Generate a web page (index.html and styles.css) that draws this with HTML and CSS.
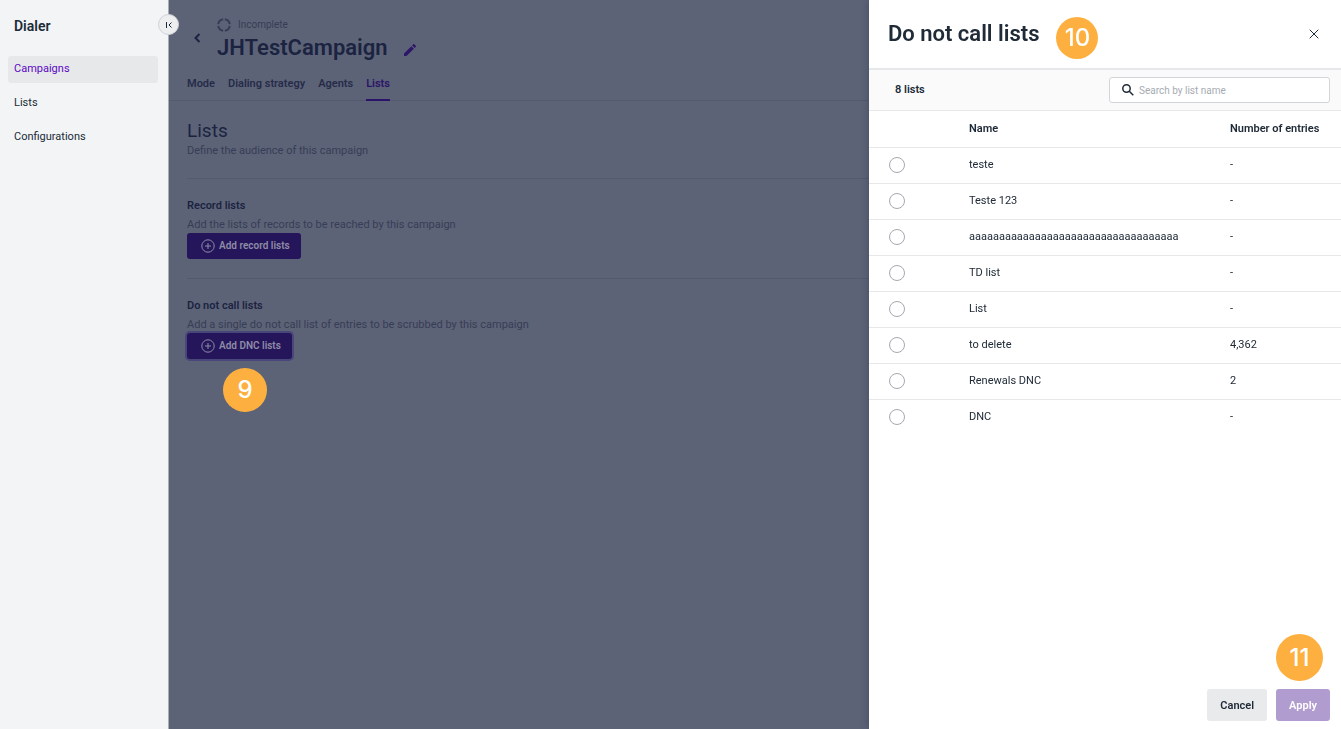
FILE: index.html
```html
<!DOCTYPE html>
<html lang="en">
<head>
    <meta charset="utf-8">
    <title>Dialer</title>
    <link rel="stylesheet" href="styles.css">
</head>
<body>
    <div class="app">
        <aside class="sidebar">
            <h2 class="sidebar-title">Dialer</h2>
            <nav class="sidebar-nav">
                <a href="#" class="active">Campaigns</a>
                <a href="#">Lists</a>
                <a href="#">Configurations</a>
            </nav>
            <button type="button" class="collapse" aria-label="Collapse menu">
                <svg width="8" height="8" viewBox="0 0 8 8"><path d="M1.500 1v6M6.500 1.500 4 4l2.500 2.500M4 4h1"/></svg>
            </button>
        </aside>

        <main class="main">
            <header class="campaign">
                <button type="button" class="icon-button back" aria-label="Back">
                    <svg width="8" height="10" viewBox="0 0 8 10"><path d="M6.500 1 2.500 5l4 4"/></svg>
                </button>
                <div>
                    <div class="status">
                        <svg width="14" height="14" viewBox="0 0 14 14"><circle cx="7" cy="7" r="5.800" pathLength="40" stroke-dasharray="8 2" stroke-dashoffset="-1"/></svg>
                        <span>Incomplete</span>
                    </div>
                    <div class="campaign-name">
                        <h1>JHTestCampaign</h1>
                        <button type="button" class="icon-button edit" aria-label="Edit name">
                            <svg width="12" height="12" viewBox="3 3 18 18"><path d="M3 17.250V21h3.750L17.810 9.940l-3.750-3.750L3 17.250zM20.710 7.040a1 1 0 0 0 0-1.410l-2.340-2.340a1 1 0 0 0-1.410 0l-1.830 1.830 3.750 3.750 1.830-1.830z"/></svg>
                        </button>
                    </div>
                </div>
            </header>

            <nav class="tabs">
                <a href="#">Mode</a>
                <a href="#">Dialing strategy</a>
                <a href="#">Agents</a>
                <a href="#" class="active">Lists</a>
            </nav>

            <div class="content">
                <section class="intro">
                    <h2>Lists</h2>
                    <p>Define the audience of this campaign</p>
                </section>
                <section>
                    <h3>Record lists</h3>
                    <p>Add the lists of records to be reached by this campaign</p>
                    <button type="button" class="add">
                        <svg width="14" height="14" viewBox="0 0 14 14"><circle cx="7" cy="7" r="6.200"/><path d="M7 4v6M4 7h6"/></svg>
                        Add record lists
                    </button>
                </section>
                <section>
                    <h3>Do not call lists</h3>
                    <p>Add a single do not call list of entries to be scrubbed by this campaign</p>
                    <button type="button" class="add focused">
                        <svg width="14" height="14" viewBox="0 0 14 14"><circle cx="7" cy="7" r="6.200"/><path d="M7 4v6M4 7h6"/></svg>
                        Add DNC lists
                    </button>
                    <span class="step step-9">9</span>
                </section>
            </div>
        </main>
    </div>

    <div class="drawer" role="dialog" aria-labelledby="drawerTitle">
        <header class="drawer-header">
            <h2 id="drawerTitle">Do not call lists</h2>
            <span class="step step-10">10</span>
            <button type="button" class="icon-button close" aria-label="Close">
                <svg width="10" height="10" viewBox="0 0 10 10"><path d="M.7.7l8.600 8.600M9.300.7.7 9.300"/></svg>
            </button>
        </header>

        <div class="toolbar">
            <span class="count">8 lists</span>
            <label class="search">
                <svg width="12" height="12" viewBox="0 0 12 12"><circle cx="4.500" cy="4.500" r="3.700"/><path d="M7.300 7.300l4 4"/></svg>
                <input type="text" placeholder="Search by list name" aria-label="Search by list name">
            </label>
        </div>

        <table class="lists">
            <thead>
                <tr><th class="pick"></th><th>Name</th><th class="entries">Number of entries</th></tr>
            </thead>
            <tbody>
                <tr><td><input type="radio" name="dnc" id="dnc1"></td><td><label for="dnc1">teste</label></td><td>-</td></tr>
                <tr><td><input type="radio" name="dnc" id="dnc2"></td><td><label for="dnc2">Teste 123</label></td><td>-</td></tr>
                <tr><td><input type="radio" name="dnc" id="dnc3"></td><td><label for="dnc3">aaaaaaaaaaaaaaaaaaaaaaaaaaaaaaaaaaa</label></td><td>-</td></tr>
                <tr><td><input type="radio" name="dnc" id="dnc4"></td><td><label for="dnc4">TD list</label></td><td>-</td></tr>
                <tr><td><input type="radio" name="dnc" id="dnc5"></td><td><label for="dnc5">List</label></td><td>-</td></tr>
                <tr><td><input type="radio" name="dnc" id="dnc6"></td><td><label for="dnc6">to delete</label></td><td>4,362</td></tr>
                <tr><td><input type="radio" name="dnc" id="dnc7"></td><td><label for="dnc7">Renewals DNC</label></td><td>2</td></tr>
                <tr><td><input type="radio" name="dnc" id="dnc8"></td><td><label for="dnc8">DNC</label></td><td>-</td></tr>
            </tbody>
        </table>

        <footer class="drawer-footer">
            <button type="button" class="cancel">Cancel</button>
            <button type="button" class="apply" disabled>Apply</button>
            <span class="step step-11">11</span>
        </footer>
    </div>
</body>
</html>
```
FILE: styles.css
```css
* {
    box-sizing: border-box;
}

body {
    margin: 0;
    font-family: Roboto, "Liberation Sans", sans-serif;
    font-size: 11px;
    line-height: 16px;
    color: #202b38;
}

h1, h2, h3, p {
    margin: 0;
}

a {
    color: inherit;
    text-decoration: none;
}

button, input {
    font: inherit;
}

button {
    border: none;
    cursor: pointer;
}

svg {
    display: block;
    fill: none;
    stroke: currentColor;
    flex: none;
}

.icon-button {
    padding: 0;
    background: none;
    color: inherit;
}

.app {
    display: flex;
    min-height: 100vh;
}

/* Side menu */
.sidebar {
    position: relative;
    flex: none;
    width: 169px;
    padding: 16px 10px 16px 8px;
    background-color: #f2f4f6;
    border-right: 1px solid #a9adb8;
}

.sidebar-title {
    padding-left: 6px;
    font-size: 14px;
    line-height: 20px;
    font-weight: 600;
}

.sidebar-nav {
    display: flex;
    flex-direction: column;
    gap: 7px;
    margin-top: 20px;
}

.sidebar-nav a {
    padding: 5px 6px 6px;
    border-radius: 3px;
}

.sidebar-nav .active {
    background-color: #e7e8ea;
    color: #5c08c4;
}

.collapse {
    position: absolute;
    top: 14px;
    right: -11px;
    display: flex;
    align-items: center;
    justify-content: center;
    width: 21px;
    height: 21px;
    padding: 0;
    border: 1px solid #d0d3d8;
    border-radius: 50%;
    background-color: #eceef0;
    color: #202b38;
}

/* Campaign page, dimmed behind the drawer */
.main {
    flex: 1;
    background-color: #5d6377;
    color: #1b2341;
}

.campaign {
    display: flex;
    padding: 17px 0 0 24px;
}

.back {
    align-self: flex-start;
    width: 24px;
    margin-top: 16px;
}

.back svg {
    stroke-width: 2;
}

.status {
    display: flex;
    align-items: center;
    gap: 7px;
    font-size: 10px;
    color: #363d55;
}

.status svg {
    stroke-width: 2;
}

.campaign-name {
    display: flex;
    align-items: center;
    gap: 16px;
}

h1 {
    font-size: 22px;
    line-height: 30px;
    font-weight: 600;
}

.edit {
    margin-top: 4px;
    color: #2c1769;
}

.edit svg {
    fill: currentColor;
    stroke: none;
}

.tabs {
    display: flex;
    gap: 13px;
    padding: 13px 18px 0;
    border-bottom: 1px solid #535a70;
    font-weight: 600;
    color: #252c49;
}

.tabs a {
    padding-bottom: 7px;
}

.tabs .active {
    border-bottom: 2px solid #2a1469;
    margin-bottom: -1px;
    color: #2a1469;
}

.content {
    padding: 0 18px;
}

.content section {
    position: relative;
    padding: 19px 0;
    border-bottom: 1px solid #535a70;
}

.content section:last-child {
    border-bottom: none;
}

.content .intro {
    padding-top: 18px;
}

.intro h2 {
    font-size: 19px;
    line-height: 24px;
    font-weight: 400;
}

.content h3 {
    font-size: 11px;
    font-weight: 600;
}

.content p {
    color: #363d56;
}

.content h3 + p {
    margin-top: 3px;
}

.add {
    display: flex;
    align-items: center;
    gap: 4px;
    height: 26px;
    padding: 0 11px 0 14px;
    border-radius: 3px;
    background-color: #25165b;
    color: #8f8ca6;
    font-size: 10px;
    font-weight: 600;
}

.focused {
    box-shadow: 0 0 0 2px #494679;
}

/* Numbered step markers */
.step {
    display: flex;
    align-items: center;
    justify-content: center;
    width: 42px;
    height: 42px;
    border-radius: 50%;
    background-color: #fdb040;
    color: #fff;
    font-family: Inter, Roboto, sans-serif;
    font-size: 24px;
    font-weight: 500;
}

.step-9 {
    position: absolute;
    top: 89px;
    left: 36px;
    width: 44px;
    height: 44px;
}

.step-10 {
    margin: 8px 0 0 17px;
}

.step-11 {
    position: absolute;
    right: 18px;
    bottom: 48px;
    width: 47px;
    height: 47px;
}

/* Drawer */
.drawer {
    position: fixed;
    top: 0;
    right: 0;
    bottom: 0;
    display: flex;
    flex-direction: column;
    width: 472px;
    background-color: #fff;
    box-shadow: 0 0 8px rgba(27, 35, 65, 0.4);
}

.drawer-header {
    display: flex;
    align-items: center;
    height: 70px;
    padding: 0 22px 0 19px;
    border-bottom: 2px solid #e6e7e9;
}

.drawer-header h2 {
    font-size: 22px;
    line-height: 28px;
    font-weight: 600;
}

.close {
    margin-left: auto;
}

.toolbar {
    display: flex;
    align-items: center;
    justify-content: space-between;
    padding: 7px 11px 7px 26px;
    border-bottom: 1px solid #e6e7e9;
    background-color: #fafafa;
}

.count {
    font-weight: 600;
}

.search {
    display: flex;
    align-items: center;
    gap: 5px;
    width: 221px;
    height: 26px;
    padding: 0 12px;
    border: 1px solid #d3d6d9;
    border-radius: 3px;
    background-color: #fff;
}

.search svg {
    stroke-width: 1.5;
}

.search input {
    flex: 1;
    min-width: 0;
    padding: 1px 0 0;
    border: none;
    outline: none;
    background: none;
    font-size: 10px;
}

.search input::placeholder {
    color: #a6abb2;
}

.lists {
    width: 100%;
    table-layout: fixed;
    border-collapse: collapse;
    text-align: left;
}

.lists th, .lists td {
    height: 36px;
    padding: 0;
    border-bottom: 1px solid #e6e7e9;
}

.lists th {
    font-weight: 600;
}

.lists tbody tr:last-child td {
    border-bottom: none;
}

.pick {
    width: 100px;
}

.entries {
    width: 111px;
}

.lists input {
    appearance: none;
    display: block;
    width: 16px;
    height: 16px;
    margin: 0 0 0 20px;
    border: 1px solid #a3a9b0;
    border-radius: 50%;
}

.drawer-footer {
    position: relative;
    display: flex;
    justify-content: flex-end;
    gap: 9px;
    margin-top: auto;
    padding: 8px 11px;
}

.drawer-footer button {
    height: 32px;
    padding: 1px 13px 0;
    border-radius: 3px;
    font-weight: 600;
}

.cancel {
    background-color: #e8eaec;
    color: #202b38;
}

.apply {
    background-color: #b19cd0;
    color: #fff;
}
```
